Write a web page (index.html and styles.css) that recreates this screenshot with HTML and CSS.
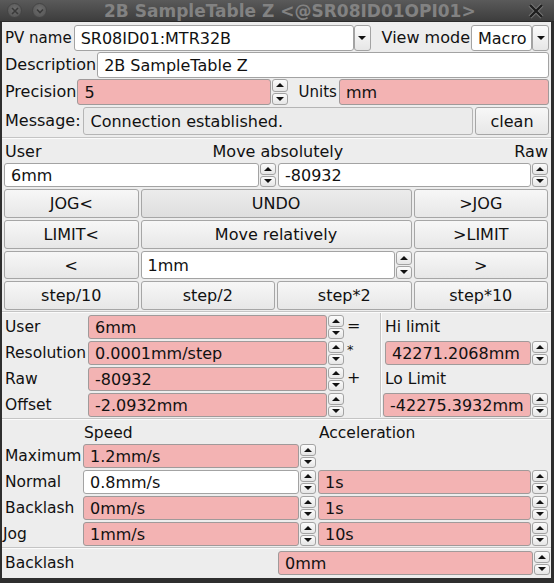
FILE: index.html
```html
<!DOCTYPE html>
<html>
<head>
<meta charset="utf-8">
<link rel="stylesheet" href="styles.css">
</head>
<body>
<div class="window">
  <div class="titlebar">
    <div class="tb-left">
      <span class="tb-btn"><svg width="8" height="8" viewBox="0 0 8 8"><path d="M1 1L7 7M7 1L1 7" stroke="#3a3a3a" stroke-width="1.6"/></svg></span>
      <span class="tb-btn"><svg width="8" height="8" viewBox="0 0 8 8"><path d="M1 2.5L4 5.5L7 2.5" stroke="#3a3a3a" stroke-width="1.6" fill="none"/></svg></span>
    </div>
    <span class="title">2B SampleTable Z &lt;@SR08ID01OPI01&gt;</span>
    <span class="tb-close"><svg width="16" height="16" viewBox="0 0 16 16"><path d="M2 2L14 14M14 2L2 14" stroke="#7a7a7a" stroke-width="4"/><path d="M2 2L14 14M14 2L2 14" stroke="#1e1e1e" stroke-width="2.4"/></svg></span>
  </div>
  <div class="frame">
    <div class="content">
      <div class="row r1">
        <span class="lbl small">PV name</span>
        <div class="box grow"><span class="val white">SR08ID01:MTR32B</span><span class="drop"><i class="tri-dn"></i></span></div>
        <span class="lbl ml">View mode</span>
        <div class="box macro"><span class="val white">Macro</span><span class="drop"><i class="tri-dn"></i></span></div>
      </div>
      <div class="row r2">
        <span class="lbl">Description</span>
        <div class="box grow"><span class="val white">2B SampleTable Z</span></div>
      </div>
      <div class="row r3">
        <span class="lbl">Precision</span>
        <div class="box grow"><span class="val pink">5</span><span class="arrows"><span class="ar"><i class="tri-up"></i></span><span class="ar"><i class="tri-dn"></i></span></span></div>
        <span class="lbl ml small">Units</span>
        <div class="box grow"><span class="val pink">mm</span></div>
      </div>
      <div class="row r4">
        <span class="lbl">Message:</span>
        <div class="box grow"><span class="val msg">Connection established.</span></div>
        <button class="btn clean">clean</button>
      </div>
      <div class="hsep"></div>
      <div class="row heads">
        <span class="lbl">User</span>
        <span class="lbl">Move absolutely</span>
        <span class="lbl">Raw</span>
      </div>
      <div class="abs">
        <div class="box"><span class="val white">6mm</span><span class="arrows"><span class="ar"><i class="tri-up"></i></span><span class="ar"><i class="tri-dn"></i></span></span></div>
        <div class="box"><span class="val white">-80932</span><span class="arrows"><span class="ar"><i class="tri-up"></i></span><span class="ar"><i class="tri-dn"></i></span></span></div>
      </div>
      <div class="btngrid">
        <button class="btn">JOG&lt;</button>
        <button class="btn span2 undo">UNDO</button>
        <button class="btn">&gt;JOG</button>
        <button class="btn">LIMIT&lt;</button>
        <button class="btn span2">Move relatively</button>
        <button class="btn">&gt;LIMIT</button>
        <button class="btn">&lt;</button>
        <div class="box span2 rel"><span class="val white">1mm</span><span class="arrows"><span class="ar"><i class="tri-up"></i></span><span class="ar"><i class="tri-dn"></i></span></span></div>
        <button class="btn">&gt;</button>
        <button class="btn">step/10</button>
        <button class="btn">step/2</button>
        <button class="btn">step*2</button>
        <button class="btn">step*10</button>
      </div>
      <div class="hsep s2"></div>
      <div class="cal">
        <span class="lbl">User</span>
        <div class="box"><span class="val pink">6mm</span><span class="arrows"><span class="ar"><i class="tri-up"></i></span><span class="ar"><i class="tri-dn"></i></span></span></div>
        <span class="sym">=</span>
        <div class="vsep"></div>
        <span class="lbl rl">Hi limit</span>

        <span class="lbl">Resolution</span>
        <div class="box"><span class="val pink">0.0001mm/step</span><span class="arrows"><span class="ar"><i class="tri-up"></i></span><span class="ar"><i class="tri-dn"></i></span></span></div>
        <span class="sym star">*</span>
        <div class="box"><span class="val pink">42271.2068mm</span><span class="arrows"><span class="ar"><i class="tri-up"></i></span><span class="ar"><i class="tri-dn"></i></span></span></div>

        <span class="lbl">Raw</span>
        <div class="box"><span class="val pink">-80932</span><span class="arrows"><span class="ar"><i class="tri-up"></i></span><span class="ar"><i class="tri-dn"></i></span></span></div>
        <span class="sym">+</span>
        <span class="lbl rl">Lo Limit</span>

        <span class="lbl">Offset</span>
        <div class="box"><span class="val pink">-2.0932mm</span><span class="arrows"><span class="ar"><i class="tri-up"></i></span><span class="ar"><i class="tri-dn"></i></span></span></div>
        <span class="sym"></span>
        <div class="box"><span class="val pink">-42275.3932mm</span><span class="arrows"><span class="ar"><i class="tri-up"></i></span><span class="ar"><i class="tri-dn"></i></span></span></div>
      </div>
      <div class="hsep s3"></div>
      <div class="speed">
        <span></span>
        <span class="lbl">Speed</span>
        <span class="lbl">Acceleration</span>

        <span class="lbl">Maximum</span>
        <div class="box"><span class="val pink">1.2mm/s</span><span class="arrows"><span class="ar"><i class="tri-up"></i></span><span class="ar"><i class="tri-dn"></i></span></span></div>
        <span></span>

        <span class="lbl">Normal</span>
        <div class="box"><span class="val white">0.8mm/s</span><span class="arrows"><span class="ar"><i class="tri-up"></i></span><span class="ar"><i class="tri-dn"></i></span></span></div>
        <div class="box"><span class="val pink">1s</span><span class="arrows"><span class="ar"><i class="tri-up"></i></span><span class="ar"><i class="tri-dn"></i></span></span></div>

        <span class="lbl">Backlash</span>
        <div class="box"><span class="val pink">0mm/s</span><span class="arrows"><span class="ar"><i class="tri-up"></i></span><span class="ar"><i class="tri-dn"></i></span></span></div>
        <div class="box"><span class="val pink">1s</span><span class="arrows"><span class="ar"><i class="tri-up"></i></span><span class="ar"><i class="tri-dn"></i></span></span></div>

        <span class="lbl jog">Jog</span>
        <div class="box"><span class="val pink">1mm/s</span><span class="arrows"><span class="ar"><i class="tri-up"></i></span><span class="ar"><i class="tri-dn"></i></span></span></div>
        <div class="box"><span class="val pink">10s</span><span class="arrows"><span class="ar"><i class="tri-up"></i></span><span class="ar"><i class="tri-dn"></i></span></span></div>
      </div>
      <div class="hsep s4"></div>
      <div class="row blash">
        <span class="lbl">Backlash</span>
        <div class="box bl"><span class="val pink">0mm</span><span class="arrows"><span class="ar"><i class="tri-up"></i></span><span class="ar"><i class="tri-dn"></i></span></span></div>
      </div>
    </div>
  </div>
</div>
</body>
</html>
```

FILE: styles.css
```css
* { box-sizing: border-box; }
body {
  margin: 0;
  font-family: "DejaVu Sans", sans-serif;
  font-size: 16px;
  color: #111;
  background: #2e2e2e;
}
.window {
  width: 554px;
  height: 583px;
  display: flex;
  flex-direction: column;
  background: #2e2e2e;
}
.titlebar {
  height: 22px;
  display: flex;
  align-items: center;
  background: linear-gradient(#5a5a5a, #3d3d3d);
  border-bottom: 1px solid #2a2a2a;
}
.tb-left {
  display: flex;
  gap: 10px;
  padding-left: 7px;
  width: 104px;
}
.tb-btn {
  width: 15px;
  height: 15px;
  border-radius: 50%;
  background: radial-gradient(circle at 50% 40%, #6e6e6e, #525252);
  border: 1px solid #454545;
  display: flex;
  align-items: center;
  justify-content: center;
}
.title {
  font-weight: bold;
  font-size: 17px;
  color: #828282;
  white-space: nowrap;
}
.tb-close {
  margin-left: auto;
  margin-right: 10px;
  display: flex;
}
.frame {
  flex: 1;
  padding: 0 3px 5px 2px;
  display: flex;
}
.content {
  flex: 1;
  background: #ededed;
  padding: 2px 2px 0 2px;
  display: flex;
  flex-direction: column;
}
.row {
  display: flex;
  align-items: center;
}
.lbl {
  padding-left: 1px;
  white-space: nowrap;
  line-height: 18px;
}
.small { font-size: 15px; }
.ml { margin-left: 10px; margin-right: 1px; }
.grow { flex: 1; }
.box {
  display: flex;
  height: 100%;
  min-width: 0;
}
.val {
  flex: 1;
  border: 1px solid #a3a3a3;
  border-radius: 3px;
  padding-left: 6px;
  display: flex;
  align-items: center;
  white-space: nowrap;
  overflow: hidden;
}
.white { background: #fff; }
.pink { background: #f3b3b3; border-color: #a09a9a; }
.msg { background: #ebebeb; border-color: #b5b5b5; padding-left: 7px; }
.drop {
  width: 17px;
  border: 1px solid #a3a3a3;
  border-radius: 3px;
  background: linear-gradient(#fbfbfb, #e6e6e6);
  display: flex;
  align-items: center;
  justify-content: center;
}
.arrows {
  width: 16px;
  margin-left: 1px;
  display: flex;
  flex-direction: column;
  gap: 1px;
}
.ar {
  flex: 1;
  border: 1px solid #a3a3a3;
  border-radius: 3px;
  background: linear-gradient(#fbfbfb, #e6e6e6);
  display: flex;
  align-items: center;
  justify-content: center;
}
.tri-up, .tri-dn {
  display: block;
  width: 0;
  height: 0;
  border-left: 4px solid transparent;
  border-right: 4px solid transparent;
}
.tri-up { border-bottom: 4px solid #111; }
.tri-dn { border-top: 4px solid #111; }

.r1 { height: 26px; margin-top: 1px; }
.r1 .box:first-of-type { margin-left: 2px; }
.macro { width: 78px; }
.r2 { height: 26px; margin-top: 1px; }
.r2 .box { margin-left: 1px; }
.r3 { height: 26px; margin-top: 1px; }
.r3 .box { margin-left: 1px; }
.r4 { height: 28px; margin-top: 2px; }
.r4 .box { margin-left: 2px; }
.btn {
  font-family: "DejaVu Sans", sans-serif;
  font-size: 16px;
  color: #111;
  border: 1px solid #a6a6a6;
  border-radius: 3px;
  background: linear-gradient(#f7f7f7, #e7e7e7);
  padding: 0;
  height: 100%;
}
.clean { width: 74px; margin-left: 2px; }
.undo { background: linear-gradient(#ececec, #dedede); }
.hsep {
  height: 2px;
  border-top: 1px solid #c4c4c4;
  border-bottom: 1px solid #fbfbfb;
  margin: 2px -2px 0 -2px;
}
.heads {
  justify-content: space-between;
  height: 18px;
  margin-top: 4px;
  padding-right: 1px;
}
.abs {
  display: grid;
  grid-template-columns: 272px 1fr;
  gap: 2px;
  height: 24px;
  margin-top: 2px;
  padding-right: 1px;
}
.btngrid {
  display: grid;
  grid-template-columns: repeat(4, 1fr);
  grid-template-rows: 29px 29px 28px 29px;
  gap: 2px;
  margin-top: 2px;
  padding-right: 1px;
}
.span2 { grid-column: span 2; }
.rel { height: 100%; }
.s2 { margin-top: 1px; }
.cal {
  display: grid;
  grid-template-columns: 84px 256px 36px 3px 1fr;
  grid-template-rows: repeat(4, 24px);
  row-gap: 2px;
  margin-top: 2px;
  padding-right: 1px;
}
.cal .lbl { font-size: 15.5px; }
.sym { padding-left: 3px; line-height: 22px; }
.star { font-size: 13px; line-height: 18px; }
.vsep {
  grid-row: 1 / span 4;
  grid-column: 4;
  border-left: 1px solid #c4c4c4;
  border-right: 1px solid #fbfbfb;
  margin: -2px 1px 0 0;
  width: 2px;
}
.rl { padding-left: 2px; align-self: center; }
.cal .lbl:not(.rl) { align-self: center; }
.cal > .box:nth-of-type(2), .cal > .box:nth-of-type(4) { margin-left: 2px; }
.s3 { margin-top: 1px; }
.speed {
  display: grid;
  grid-template-columns: 77px 233px 1fr;
  grid-template-rows: 19px repeat(4, 24px);
  column-gap: 2px;
  row-gap: 2px;
  margin-top: 3px;
  padding-right: 1px;
}
.speed .lbl { align-self: center; font-size: 15.5px; }
.speed > .lbl:nth-child(2), .speed > .lbl:nth-child(3) { align-self: end; }
.jog { margin-left: -2px; }
.s4 { margin-top: 1px; }
.blash {
  height: 24px;
  margin-top: 2px;
  justify-content: space-between;
}
.blash .lbl { font-size: 15.5px; }
.bl { width: 272px; margin-right: -1px; }
```
